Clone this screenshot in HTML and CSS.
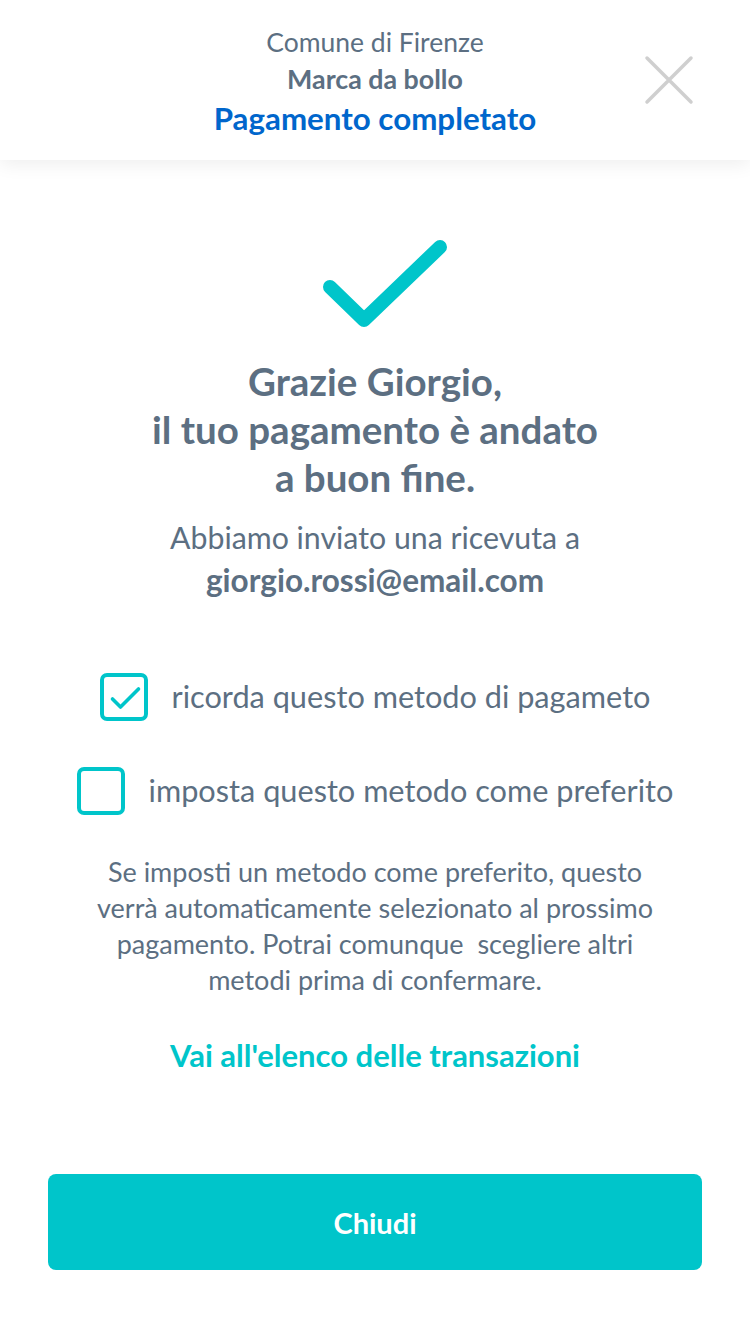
FILE: index.html
```html
<!DOCTYPE html>
<html lang="it">
<head>
<meta charset="utf-8">
<title>Pagamento completato</title>
<link rel="stylesheet" href="styles.css">
</head>
<body>
<div class="screen">
  <header class="topbar">
    <div class="topbar-lines">
      <div class="entity">Comune di Firenze</div>
      <div class="service">Marca da bollo</div>
      <div class="status">Pagamento completato</div>
    </div>
    <button class="close" aria-label="Chiudi">
      <svg width="50" height="50" viewBox="0 0 50 50"><path d="M3 3 L47 47 M47 3 L3 47" stroke="#cfcfcf" stroke-width="3.5" stroke-linecap="round" fill="none"/></svg>
    </button>
  </header>

  <main class="content">
    <div class="success-icon">
      <svg width="150" height="100" viewBox="300 230 150 100"><path d="M330 287 L364 320 L440 247" stroke="#00c5ca" stroke-width="14" stroke-linecap="round" stroke-linejoin="round" fill="none"/></svg>
    </div>
    <h1 class="title">Grazie Giorgio,<br>il tuo pagamento è andato<br>a buon fine.</h1>
    <p class="receipt">Abbiamo inviato una ricevuta a<br><strong>giorgio.rossi@email.com</strong></p>

    <div class="options">
      <label class="option">
        <span class="box"><svg width="40" height="40" viewBox="0 0 40 40"><path d="M8.5 22 L16.5 30 L34.5 12" stroke="#00c5ca" stroke-width="3.6" stroke-linecap="round" stroke-linejoin="round" fill="none"/></svg></span>
        <span class="option-text">ricorda questo metodo di pagameto</span>
      </label>
      <label class="option">
        <span class="box"></span>
        <span class="option-text">imposta questo metodo come preferito</span>
      </label>
    </div>

    <p class="note">Se imposti un metodo come preferito, questo<br>verrà automaticamente selezionato al prossimo<br>pagamento. Potrai comunque&nbsp; scegliere altri<br>metodi prima di confermare.</p>

    <a class="link" href="#">Vai all'elenco delle transazioni</a>
  </main>

  <footer class="actions">
    <button class="primary">Chiudi</button>
  </footer>
</div>
</body>
</html>
```
FILE: styles.css
```css
* { box-sizing: border-box; }
html, body { margin: 0; padding: 0; background: #fff; }
body {
  font-family: Lato, "Noto Sans", sans-serif;
  color: #5c6f82;
  width: 750px;
  height: 1334px;
  overflow: hidden;
}
.screen {
  width: 750px;
  height: 1334px;
  display: flex;
  flex-direction: column;
}
.topbar {
  position: relative;
  height: 160px;
  flex: none;
  background: #fff;
  box-shadow: 0 4px 18px rgba(0, 0, 0, 0.07);
  display: flex;
  justify-content: center;
  padding-top: 24px;
  z-index: 1;
}
.topbar-lines {
  text-align: center;
}
.entity {
  font-size: 26.5px;
  line-height: 36px;
  font-weight: 400;
}
.service {
  font-size: 26.8px;
  line-height: 38px;
  font-weight: 700;
}
.status {
  font-size: 31.3px;
  line-height: 40px;
  font-weight: 700;
  color: #0066cc;
}
.close {
  position: absolute;
  right: 56px;
  top: 55px;
  width: 50px;
  height: 50px;
  padding: 0;
  border: 0;
  background: none;
}
.close svg { display: block; }
.content {
  flex: 1;
  display: flex;
  flex-direction: column;
  align-items: center;
  text-align: center;
  padding-top: 70px;
}
.success-icon svg { display: block; }
.title {
  margin: 27px 0 0;
  font-size: 38.5px;
  line-height: 48px;
  font-weight: 700;
}
.receipt {
  margin: 14.5px 0 0;
  font-size: 30.3px;
  line-height: 43px;
}
.receipt strong { font-weight: 700; font-size: 31.5px; }
.options {
  margin-top: 71.5px;
  display: flex;
  flex-direction: column;
  align-items: center;
  gap: 46px;
}
.option {
  display: flex;
  align-items: center;
  gap: 24px;
}
.box {
  width: 48px;
  height: 48px;
  border: 4px solid #00c5ca;
  border-radius: 7px;
  display: flex;
  align-items: center;
  justify-content: center;
}
.box svg { display: block; }
.option-text {
  font-size: 30.7px;
  line-height: 40px;
}
.note {
  margin: 39px 0 0;
  font-size: 27px;
  line-height: 36px;
}
.link {
  margin-top: 37px;
  font-size: 31px;
  line-height: 40px;
  font-weight: 700;
  color: #00c5ca;
  text-decoration: none;
}
.actions {
  flex: none;
  padding: 0 48px 64px;
}
.primary {
  display: block;
  width: 100%;
  height: 96px;
  border: 0;
  border-radius: 8px;
  background: #00c5ca;
  color: #fff;
  font-family: Lato, "Noto Sans", sans-serif;
  font-size: 29px;
  font-weight: 700;
}
```
